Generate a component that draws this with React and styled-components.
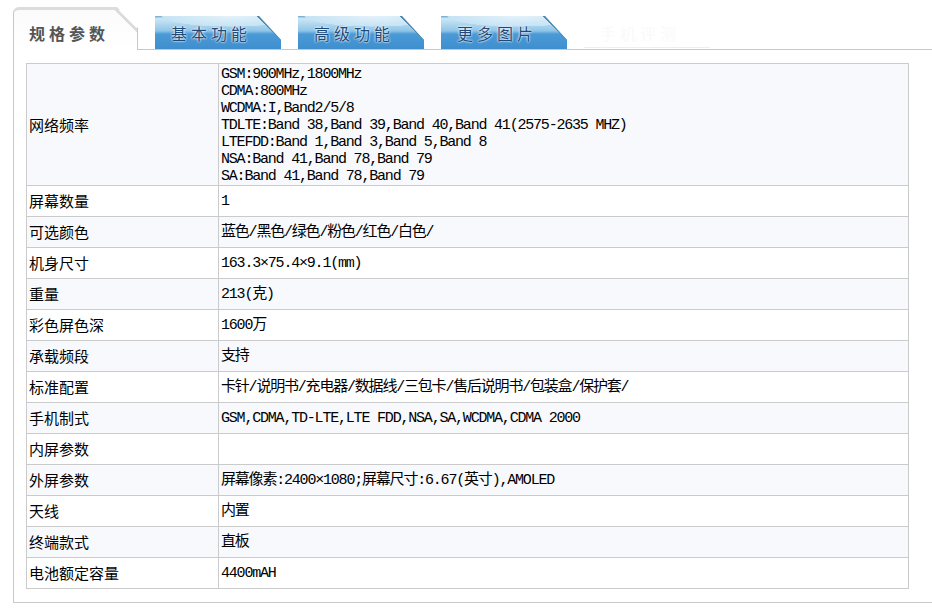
import React from "react";
import styled, { createGlobalStyle } from "styled-components";

const GlobalStyle = createGlobalStyle`
  body {
    margin: 0;
    background: #fff;
    font-family: "Noto Sans CJK SC", "Liberation Sans", sans-serif;
  }
`;

const Wrapper = styled.div`
  padding: 7px 0 0 13px;
`;

const TabBar = styled.div`
  display: flex;
  align-items: flex-end;
  gap: 17px;
  height: 42px;
`;

const ActiveTab = styled.div`
  position: relative;
  z-index: 1;
  box-sizing: border-box;
  width: 125px;
  height: 43px;
  margin-bottom: -1px;
  padding: 13px 0 0 15px;
  border-left: 1px solid #c8c8c8;
  border-right: 1px solid #c8c8c8;
  border-top: 3px solid #dcdcdc;
  border-top-left-radius: 6px;
  clip-path: polygon(0 0, calc(100% - 21px) 0, 100% 21px, 100% 100%, 0 100%);
  background:
    linear-gradient(225deg, transparent 13px, #dcdcdc 13px, #dcdcdc 16px, transparent 16px),
    linear-gradient(#fbfbfb, #fff);
  color: #555;
  font-size: 16px;
  font-weight: bold;
  letter-spacing: 4px;
  line-height: 20px;
`;

const Tab = styled.div`
  box-sizing: border-box;
  width: 126px;
  height: 33px;
  padding: 6px 0 0 16px;
  clip-path: polygon(0 0, calc(100% - 22px) 0, 100% 24px, 100% 100%, 0 100%);
  background:
    linear-gradient(225deg, transparent 15px, #4f86ad 15px, #4f86ad 17px, transparent 17px),
    radial-gradient(ellipse 120% 70% at 60% 0%, #e4f2fa 0%, #c6e3f4 45%, transparent 46%),
    linear-gradient(#7fb3d6 0px, #7fb3d6 1px, #cfe7f5 2px, #8fc5e8 45%, #4a9ad6 55%, #3f8fcf 100%);
  color: #1d4a78;
  font-size: 16px;
  letter-spacing: 4px;
  line-height: 22px;
  text-shadow: 0 0 2px #fff, 0 0 2px #fff;
`;

const GhostTab = styled.div`
  box-sizing: border-box;
  width: 126px;
  height: 33px;
  margin-bottom: 1px;
  border-bottom: 1px solid #efefef;
  padding: 6px 0 0 16px;
  color: #fafafa;
  font-size: 16px;
  letter-spacing: 4px;
`;

const Panel = styled.div`
  border-top: 1px solid #c8c8c8;
  border-left: 1px solid #c8c8c8;
  border-bottom: 1px solid #c8c8c8;
  padding: 13px 0 13px 12px;
`;

const Table = styled.table`
  border-collapse: collapse;
  width: 883px;
  table-layout: fixed;
`;

const Row = styled.tr`
  background: ${(p) => (p.$shaded ? "#f8f9fc" : "#fff")};
`;

const Label = styled.td`
  width: 187px;
  height: 30px;
  padding: 0 2px;
  border: 1px solid #cbcbcb;
  color: #000;
  font-size: 15px;
  line-height: 18px;
  font-family: "Noto Sans CJK SC", sans-serif;
  vertical-align: middle;
`;

const Value = styled.td`
  height: 30px;
  padding: ${(p) => (p.$multi ? "2px 2px 0" : "0 2px")};
  border: 1px solid #cbcbcb;
  color: #000;
  font-size: 15px;
  letter-spacing: -1.2px;
  line-height: 17px;
  font-family: "Liberation Mono", "Noto Sans CJK SC", monospace;
  vertical-align: middle;
  white-space: pre-line;
`;

const specs = [
  {
    label: "网络频率",
    value:
      "GSM:900MHz,1800MHz\nCDMA:800MHz\nWCDMA:I,Band2/5/8\nTDLTE:Band 38,Band 39,Band 40,Band 41(2575-2635 MHZ)\nLTEFDD:Band 1,Band 3,Band 5,Band 8\nNSA:Band 41,Band 78,Band 79\nSA:Band 41,Band 78,Band 79",
    multi: true,
  },
  { label: "屏幕数量", value: "1" },
  { label: "可选颜色", value: "蓝色/黑色/绿色/粉色/红色/白色/" },
  { label: "机身尺寸", value: "163.3×75.4×9.1(mm)" },
  { label: "重量", value: "213(克)" },
  { label: "彩色屏色深", value: "1600万" },
  { label: "承载频段", value: "支持" },
  { label: "标准配置", value: "卡针/说明书/充电器/数据线/三包卡/售后说明书/包装盒/保护套/" },
  { label: "手机制式", value: "GSM,CDMA,TD-LTE,LTE FDD,NSA,SA,WCDMA,CDMA 2000" },
  { label: "内屏参数", value: "" },
  { label: "外屏参数", value: "屏幕像素:2400×1080;屏幕尺寸:6.67(英寸),AMOLED" },
  { label: "天线", value: "内置" },
  { label: "终端款式", value: "直板" },
  { label: "电池额定容量", value: "4400mAH" },
];

const App = () => (
  <Wrapper>
    <GlobalStyle />
    <TabBar>
      <ActiveTab>规格参数</ActiveTab>
      <Tab>基本功能</Tab>
      <Tab>高级功能</Tab>
      <Tab>更多图片</Tab>
      <GhostTab>手机评测</GhostTab>
    </TabBar>
    <Panel>
      <Table>
        <tbody>
          {specs.map((s, i) => (
            <Row key={s.label} $shaded={i % 2 === 0}>
              <Label>{s.label}</Label>
              <Value $multi={s.multi}>{s.value}</Value>
            </Row>
          ))}
        </tbody>
      </Table>
    </Panel>
  </Wrapper>
);

export default App;
